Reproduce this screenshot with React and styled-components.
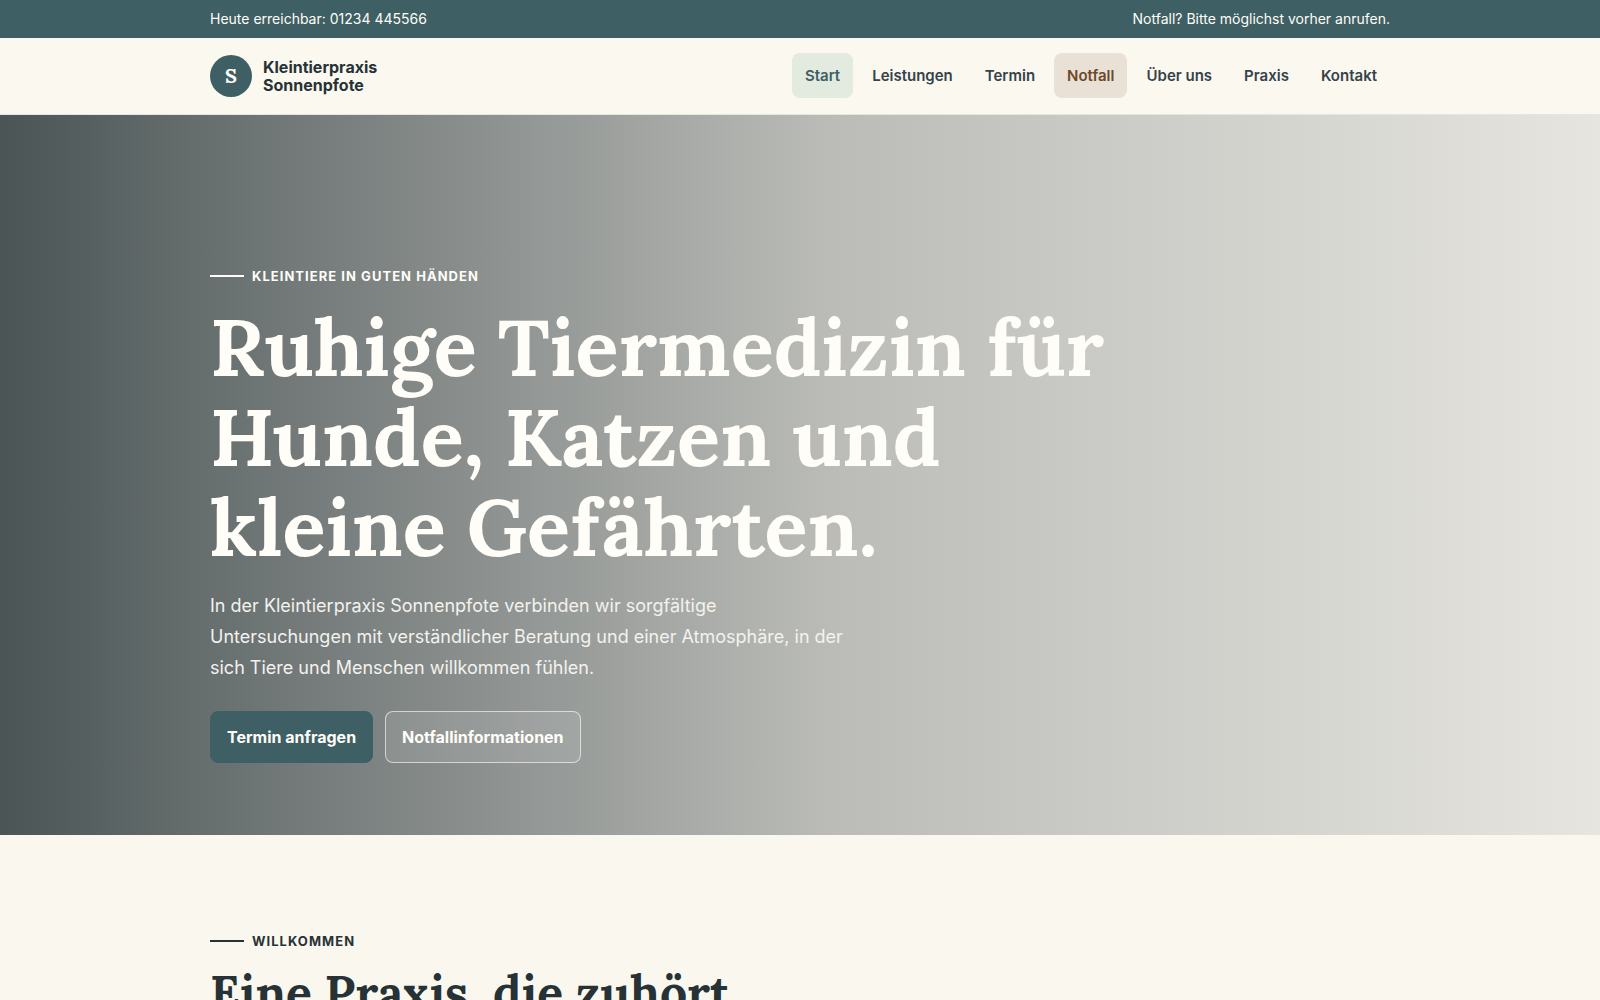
import React from "react";
import styled, { createGlobalStyle } from "styled-components";

const GlobalStyle = createGlobalStyle`
  * {
    box-sizing: border-box;
  }
  body {
    margin: 0;
    background: #faf7ef;
    color: #263235;
    font-family: Inter, "Liberation Sans", sans-serif;
    font-size: 16px;
    line-height: 27px;
  }
  a {
    color: inherit;
    text-decoration: none;
  }
`;

const navItems = [
  { label: "Start", href: "#start", tone: "active" },
  { label: "Leistungen", href: "#leistungen" },
  { label: "Termin", href: "#termin" },
  { label: "Notfall", href: "#notfall", tone: "urgent" },
  { label: "Über uns", href: "#ueber-uns" },
  { label: "Praxis", href: "#praxis" },
  { label: "Kontakt", href: "#kontakt" },
];

export default function App() {
  return (
    <>
      <GlobalStyle />
      <TopBar>
        <TopBarInner>
          <span>
            Heute erreichbar: <a href="tel:01234445566">01234 445566</a>
          </span>
          <span>Notfall? Bitte möglichst vorher anrufen.</span>
        </TopBarInner>
      </TopBar>
      <Header>
        <HeaderInner>
          <Brand href="#start">
            <BrandMark aria-hidden="true">S</BrandMark>
            <BrandName>
              Kleintierpraxis
              <br />
              Sonnenpfote
            </BrandName>
          </Brand>
          <Nav aria-label="Hauptnavigation">
            {navItems.map((item) => (
              <NavLink key={item.href} href={item.href} $tone={item.tone}>
                {item.label}
              </NavLink>
            ))}
          </Nav>
        </HeaderInner>
      </Header>
      <main>
        <Hero id="start">
          <Container>
            <Eyebrow>Kleintiere in guten Händen</Eyebrow>
            <HeroTitle>Ruhige Tiermedizin für Hunde, Katzen und kleine Gefährten.</HeroTitle>
            <HeroText>
              In der Kleintierpraxis Sonnenpfote verbinden wir sorgfältige Untersuchungen mit
              verständlicher Beratung und einer Atmosphäre, in der sich Tiere und Menschen
              willkommen fühlen.
            </HeroText>
            <Actions>
              <ButtonLink href="#termin">Termin anfragen</ButtonLink>
              <ButtonLink href="#notfall" $ghost>
                Notfallinformationen
              </ButtonLink>
            </Actions>
          </Container>
        </Hero>
        <Section>
          <Container>
            <Eyebrow>Willkommen</Eyebrow>
            <SectionTitle>Eine Praxis, die zuhört</SectionTitle>
          </Container>
        </Section>
      </main>
    </>
  );
}

const toneBackground = { active: "#e3eadf", urgent: "#eae1d6" };
const toneColor = { active: "#3e5f63", urgent: "#6b4a2b" };

const Container = styled.div`
  width: calc(100% - 40px);
  max-width: 1180px;
  margin: 0 auto;
`;
const TopBar = styled.div`
  background: #3e5f63;
  color: #fffdf8;
  font-size: 14px;
  line-height: 24px;
`;
const TopBarInner = styled(Container)`
  display: flex;
  justify-content: space-between;
  gap: 16px;
  padding: 7px 0;
`;
const Header = styled.header`
  background: #fbf8f0;
  border-bottom: 1px solid #e3e8df;
`;
const HeaderInner = styled(Container)`
  display: flex;
  align-items: center;
  justify-content: space-between;
  gap: 24px;
  padding: 15px 0 16px;
`;
const Brand = styled.a`
  display: flex;
  align-items: center;
  gap: 11px;
  line-height: 18px;
`;
const BrandMark = styled.span`
  display: grid;
  place-items: center;
  width: 42px;
  height: 42px;
  border-radius: 50%;
  background: #3e5f63;
  color: #fffdf8;
  font-family: Lora, "Noto Serif", "Liberation Serif", serif;
  font-size: 20px;
  font-weight: 700;
`;
const BrandName = styled.span`
  font-weight: 700;
`;
const Nav = styled.nav`
  display: flex;
  flex-wrap: wrap;
  gap: 6px;
`;
const NavLink = styled.a`
  padding: 9px 13px;
  border-radius: 8px;
  background: ${({ $tone }) => toneBackground[$tone] || "transparent"};
  color: ${({ $tone }) => toneColor[$tone] || "#34444a"};
  font-size: 15px;
  font-weight: 600;
`;
const Hero = styled.section`
  display: flex;
  align-items: flex-end;
  min-height: 720px;
  padding: 72px 0;
  background: linear-gradient(90deg, #4b5556 0%, #bbbcb8 52%, #e6e5e0 100%);
  color: #fffdf8;
`;
const Eyebrow = styled.p`
  display: flex;
  align-items: center;
  gap: 8px;
  margin: 0 0 15px;
  font-size: 13px;
  font-weight: 700;
  line-height: 22px;
  letter-spacing: 0.08em;
  text-transform: uppercase;
  &::before {
    content: "";
    width: 34px;
    height: 2px;
    background: currentColor;
  }
`;
const HeroTitle = styled.h1`
  max-width: 920px;
  margin: 0 0 18px;
  font-family: Lora, "Noto Serif", "Liberation Serif", serif;
  font-size: 80px;
  font-weight: 700;
  line-height: 90px;
`;
const HeroText = styled.p`
  max-width: 650px;
  margin: 0 0 28px;
  color: #f3f2ee;
  font-size: 18px;
  line-height: 31px;
`;
const Actions = styled.div`
  display: flex;
  flex-wrap: wrap;
  gap: 12px;
`;
const ButtonLink = styled.a`
  padding: 12px 16px;
  border: 1px solid ${({ $ghost }) => ($ghost ? "rgba(255, 255, 255, 0.6)" : "#3e5f63")};
  border-radius: 8px;
  background: ${({ $ghost }) => ($ghost ? "rgba(255, 255, 255, 0.1)" : "#3e5f63")};
  color: #fffdf8;
  font-weight: 700;
  line-height: 26px;
`;
const Section = styled.section`
  padding: 95px 0;
`;
const SectionTitle = styled.h2`
  margin: 0;
  font-family: Lora, "Noto Serif", "Liberation Serif", serif;
  font-size: 48px;
  font-weight: 700;
  line-height: 52px;
`;
